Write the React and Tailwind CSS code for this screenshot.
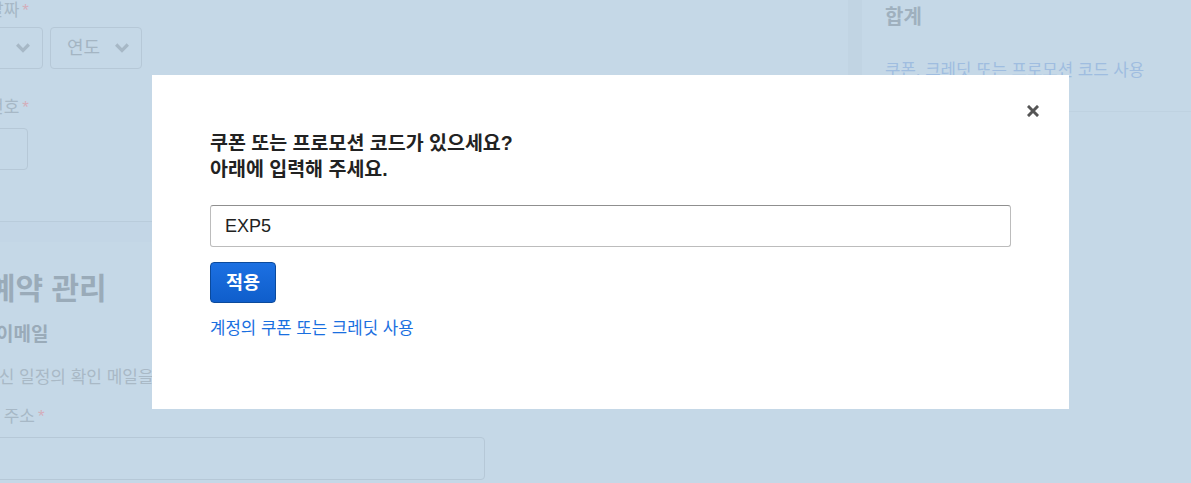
import React from 'react';

const font = { fontFamily: '"Liberation Sans", "Noto Sans CJK KR", sans-serif' };

const Chevron = ({ className }) => (
  <svg viewBox="0 0 12 8" className={className} fill="none" stroke="currentColor" strokeWidth="2.8" strokeLinecap="square">
    <path d="M2 2 L6 6 L10 2" />
  </svg>
);

const Label = ({ children }) => (
  <div className="text-[17px] leading-[20px] text-[#a7b8c6]">
    {children}
    <span className="ml-[3px] text-[#d4aebb]">*</span>
  </div>
);

const Select = ({ label, width }) => (
  <div
    className={`flex h-[42px] items-center justify-between rounded-[4px] border border-[#b6c8d7] pl-[16px] pr-[12px] text-[18px] text-[#a4b5c3] ${width}`}
  >
    <span>{label}</span>
    <Chevron className="h-[10px] w-[14px] text-[#a7b8c6]" />
  </div>
);

// faded page behind the dialog
const Page = () => (
  <div className="flex h-full">
    <div className="-ml-[48px] w-[896px] shrink-0">
      <div className="pt-[1px]">
        <Label>만료 날짜</Label>
        <div className="mt-[6px] flex gap-[7px]">
          <Select label="월" width="w-[91px]" />
          <Select label="연도" width="w-[92px]" />
        </div>
        <div className="mt-[29px]">
          <Label>보안 번호</Label>
        </div>
        <div className="mt-[10px] h-[42px] w-[76px] rounded-[4px] border border-[#b6c8d7]" />
      </div>
      <div className="mt-[51px] border-t border-[#b9ccdb]" />
      <div className="h-[20px] bg-[#c3d6e6]" />
      <div className="pt-[27px]">
        <h2 className="text-[30px] font-bold leading-[40px] text-[#9aabb9]">내 예약 관리</h2>
        <h3 className="mt-[12px] pl-[44px] text-[19px] font-bold leading-[28px] text-[#9aabb9]">이메일</h3>
        <p className="mt-[18px] pl-[31px] text-[17px] leading-[22px] text-[#a9b9c6]">
          당신 일정의 확인 메일을 받을 이메일 주소를 입력해 주세요.
        </p>
        <div className="mt-[18px]">
          <Label>이메일 주소</Label>
        </div>
        <div className="mt-[10px] h-[43px] w-[533px] rounded-[4px] border border-[#b6c8d7]" />
      </div>
    </div>
    <div className="flex-1 self-start border-l-[14px] border-[#c1d4e3]">
      <div className="border-b border-[#bfd2e1] pb-[29px] pl-[23px]">
        <div className="pt-[3px] text-[20px] font-bold leading-[28px] text-[#9fb0be]">합계</div>
        <div className="mt-[29px] text-[16.75px] leading-[22px] text-[#9fbde0]">쿠폰, 크레딧 또는 프로모션 코드 사용</div>
      </div>
    </div>
  </div>
);

const Close = () => (
  <svg viewBox="0 0 12 12" className="h-[12px] w-[12px]" stroke="#555555" strokeWidth="3" strokeLinecap="square">
    <path d="M2 2 L10 10 M10 2 L2 10" />
  </svg>
);

export default function App() {
  return (
    <div className="relative h-[483px] w-[1191px] overflow-hidden bg-[#c5d8e7]" style={font}>
      <Page />

      {/* dialog */}
      <div className="absolute left-[152px] top-[75px] h-[334px] w-[917px] bg-white px-[58px] pt-[55px]">
        <button className="absolute right-[30px] top-[30px]">
          <Close />
        </button>
        <h2 className="text-[19.5px] font-bold leading-[26px] text-[#222222]">
          쿠폰 또는 프로모션 코드가 있으세요?
          <br />
          아래에 입력해 주세요.
        </h2>
        <div className="mt-[23px] flex h-[42px] items-center rounded-[3px] border border-[#bcbcbc] border-t-[#8f8f8f] px-[14px] text-[18px] text-[#222222]">
          EXP5
        </div>
        <button className="mt-[15px] h-[41px] w-[66px] rounded-[4px] border border-[#0b4a9c] bg-gradient-to-b from-[#1c70e2] to-[#0f5ecb] text-[18.5px] font-bold text-white">
          적용
        </button>
        <div className="mt-[15px] text-[16.75px] leading-[22px] text-[#1a6fdf]">계정의 쿠폰 또는 크레딧 사용</div>
      </div>
    </div>
  );
}
